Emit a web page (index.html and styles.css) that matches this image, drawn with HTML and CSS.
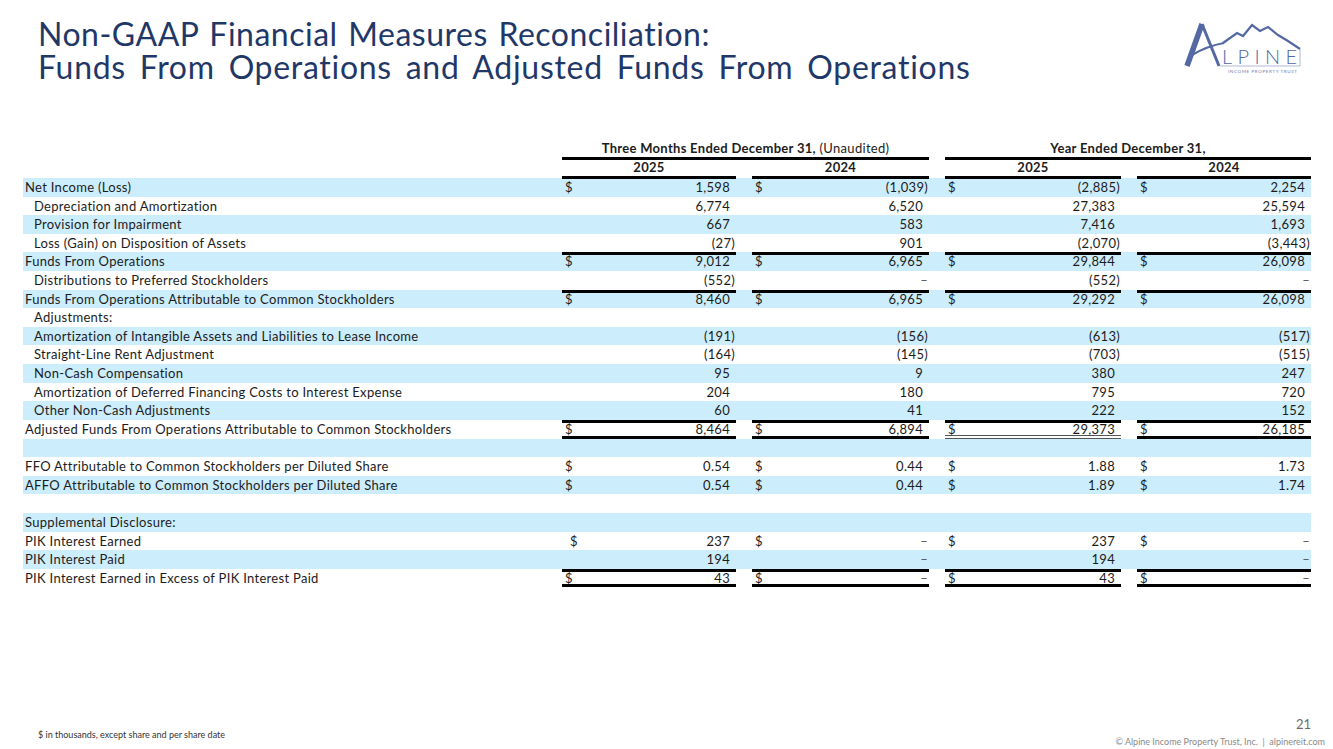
FILE: index.html
```html
<!DOCTYPE html>
<html>
<head>
<meta charset="utf-8">
<link rel="stylesheet" href="styles.css">
</head>
<body>
<div class="slide">
  <header class="top">
    <h1 class="title"><span class="tl">Non-GAAP Financial Measures Reconciliation:</span><span class="tl tl2">Funds From Operations and Adjusted Funds From Operations</span></h1>
    <svg class="logo" width="140" height="56" viewBox="0 0 140 56">
      <path d="M17,46 L32,4" fill="none" stroke="#5468a3" stroke-width="5.5"/>
      <path d="M32,4 L49,46" fill="none" stroke="#5468a3" stroke-width="3"/>
      <path d="M22,35 Q37,26 54,23" fill="none" stroke="#5468a3" stroke-width="2.2"/>
      <polyline points="53,23 67,13 73,16 82,5 90,11 98,7 108,15 118,21 130,29" fill="none" stroke="#5468a3" stroke-width="2.2" stroke-linejoin="miter"/>
      <path d="M130,29 L130,46 L50,46" fill="none" stroke="#8f9cc6" stroke-width="0.7"/>
      <text x="52" y="44" class="logo-word" textLength="75" lengthAdjust="spacing">LPINE</text>
      <text x="58" y="53" class="logo-sub" textLength="69" lengthAdjust="spacing">INCOME PROPERTY TRUST</text>
    </svg>
  </header>

  <section class="table">
    <div class="hrow group">
      <div></div>
      <div class="span2 grp"><b>Three Months Ended December 31,</b> (Unaudited)</div>
      <div class="span2 grp"><b>Year Ended December 31,</b></div>
    </div>
    <div class="hrow years">
      <div></div>
      <div class="yr">2025</div>
      <div class="yr">2024</div>
      <div class="yr">2025</div>
      <div class="yr">2024</div>
    </div>

    <div class="row sh">
      <div class="lab">Net Income (Loss)</div>
      <div class="n"><span class="d">$</span><span class="v">1,598</span></div>
      <div class="n"><span class="d">$</span><span class="v p">(1,039)</span></div>
      <div class="n"><span class="d">$</span><span class="v p">(2,885)</span></div>
      <div class="n"><span class="d">$</span><span class="v">2,254</span></div>
    </div>
    <div class="row">
      <div class="lab ind">Depreciation and Amortization</div>
      <div class="n"><span class="v">6,774</span></div>
      <div class="n"><span class="v">6,520</span></div>
      <div class="n"><span class="v">27,383</span></div>
      <div class="n"><span class="v">25,594</span></div>
    </div>
    <div class="row sh">
      <div class="lab ind">Provision for Impairment</div>
      <div class="n"><span class="v">667</span></div>
      <div class="n"><span class="v">583</span></div>
      <div class="n"><span class="v">7,416</span></div>
      <div class="n"><span class="v">1,693</span></div>
    </div>
    <div class="row">
      <div class="lab ind">Loss (Gain) on Disposition of Assets</div>
      <div class="n"><span class="v p">(27)</span></div>
      <div class="n"><span class="v">901</span></div>
      <div class="n"><span class="v p">(2,070)</span></div>
      <div class="n"><span class="v p">(3,443)</span></div>
    </div>
    <div class="row sh topline">
      <div class="lab">Funds From Operations</div>
      <div class="n"><span class="d">$</span><span class="v">9,012</span></div>
      <div class="n"><span class="d">$</span><span class="v">6,965</span></div>
      <div class="n"><span class="d">$</span><span class="v">29,844</span></div>
      <div class="n"><span class="d">$</span><span class="v">26,098</span></div>
    </div>
    <div class="row">
      <div class="lab ind">Distributions to Preferred Stockholders</div>
      <div class="n"><span class="v p">(552)</span></div>
      <div class="n"><span class="v p dash">–</span></div>
      <div class="n"><span class="v p">(552)</span></div>
      <div class="n"><span class="v p dash">–</span></div>
    </div>
    <div class="row sh topline">
      <div class="lab">Funds From Operations Attributable to Common Stockholders</div>
      <div class="n"><span class="d">$</span><span class="v">8,460</span></div>
      <div class="n"><span class="d">$</span><span class="v">6,965</span></div>
      <div class="n"><span class="d">$</span><span class="v">29,292</span></div>
      <div class="n"><span class="d">$</span><span class="v">26,098</span></div>
    </div>
    <div class="row">
      <div class="lab ind">Adjustments:</div>
      <div></div><div></div><div></div><div></div>
    </div>
    <div class="row sh">
      <div class="lab ind">Amortization of Intangible Assets and Liabilities to Lease Income</div>
      <div class="n"><span class="v p">(191)</span></div>
      <div class="n"><span class="v p">(156)</span></div>
      <div class="n"><span class="v p">(613)</span></div>
      <div class="n"><span class="v p">(517)</span></div>
    </div>
    <div class="row">
      <div class="lab ind">Straight-Line Rent Adjustment</div>
      <div class="n"><span class="v p">(164)</span></div>
      <div class="n"><span class="v p">(145)</span></div>
      <div class="n"><span class="v p">(703)</span></div>
      <div class="n"><span class="v p">(515)</span></div>
    </div>
    <div class="row sh">
      <div class="lab ind">Non-Cash Compensation</div>
      <div class="n"><span class="v">95</span></div>
      <div class="n"><span class="v">9</span></div>
      <div class="n"><span class="v">380</span></div>
      <div class="n"><span class="v">247</span></div>
    </div>
    <div class="row">
      <div class="lab ind">Amortization of Deferred Financing Costs to Interest Expense</div>
      <div class="n"><span class="v">204</span></div>
      <div class="n"><span class="v">180</span></div>
      <div class="n"><span class="v">795</span></div>
      <div class="n"><span class="v">720</span></div>
    </div>
    <div class="row sh">
      <div class="lab ind">Other Non-Cash Adjustments</div>
      <div class="n"><span class="v">60</span></div>
      <div class="n"><span class="v">41</span></div>
      <div class="n"><span class="v">222</span></div>
      <div class="n"><span class="v">152</span></div>
    </div>
    <div class="row topline botline">
      <div class="lab">Adjusted Funds From Operations Attributable to Common Stockholders</div>
      <div class="n"><span class="d">$</span><span class="v">8,464</span></div>
      <div class="n"><span class="d">$</span><span class="v">6,894</span></div>
      <div class="n dbl"><span class="d">$</span><span class="v">29,373</span></div>
      <div class="n"><span class="d">$</span><span class="v">26,185</span></div>
    </div>
    <div class="row sh">
      <div class="lab"></div>
      <div></div><div></div><div></div><div></div>
    </div>
    <div class="row">
      <div class="lab">FFO Attributable to Common Stockholders per Diluted Share</div>
      <div class="n"><span class="d">$</span><span class="v">0.54</span></div>
      <div class="n"><span class="d">$</span><span class="v">0.44</span></div>
      <div class="n"><span class="d">$</span><span class="v">1.88</span></div>
      <div class="n"><span class="d">$</span><span class="v">1.73</span></div>
    </div>
    <div class="row sh">
      <div class="lab">AFFO Attributable to Common Stockholders per Diluted Share</div>
      <div class="n"><span class="d">$</span><span class="v">0.54</span></div>
      <div class="n"><span class="d">$</span><span class="v">0.44</span></div>
      <div class="n"><span class="d">$</span><span class="v">1.89</span></div>
      <div class="n"><span class="d">$</span><span class="v">1.74</span></div>
    </div>
    <div class="row">
      <div class="lab"></div>
      <div></div><div></div><div></div><div></div>
    </div>
    <div class="row sh">
      <div class="lab">Supplemental Disclosure:</div>
      <div></div><div></div><div></div><div></div>
    </div>
    <div class="row">
      <div class="lab">PIK Interest Earned</div>
      <div class="n inset"><span class="d">$</span><span class="v">237</span></div>
      <div class="n"><span class="d">$</span><span class="v p dash">–</span></div>
      <div class="n"><span class="d">$</span><span class="v">237</span></div>
      <div class="n"><span class="d">$</span><span class="v p dash">–</span></div>
    </div>
    <div class="row sh">
      <div class="lab">PIK Interest Paid</div>
      <div class="n"><span class="v">194</span></div>
      <div class="n"><span class="v p dash">–</span></div>
      <div class="n"><span class="v">194</span></div>
      <div class="n"><span class="v p dash">–</span></div>
    </div>
    <div class="row topline botline">
      <div class="lab">PIK Interest Earned in Excess of PIK Interest Paid</div>
      <div class="n"><span class="d">$</span><span class="v">43</span></div>
      <div class="n"><span class="d">$</span><span class="v p dash">–</span></div>
      <div class="n"><span class="d">$</span><span class="v">43</span></div>
      <div class="n"><span class="d">$</span><span class="v p dash">–</span></div>
    </div>
  </section>

  <footer class="foot">
    <div class="note">$ in thousands, except share and per share date</div>
    <div class="meta">
      <div class="page">21</div>
      <div class="copy">© Alpine Income Property Trust, Inc. &nbsp;|&nbsp; alpinereit.com</div>
    </div>
  </footer>
</div>
</body>
</html>
```
FILE: styles.css
```css
html, body {
  margin: 0;
  padding: 0;
  background: #ffffff;
}
.slide {
  width: 1333px;
  height: 749px;
  display: flex;
  flex-direction: column;
  overflow: hidden;
  font-family: Lato, "Open Sans", sans-serif;
  color: #1c1c1c;
}
.top {
  display: flex;
  justify-content: space-between;
  align-items: flex-start;
  padding: 17px 23px 0 38px;
  height: 110px;
  box-sizing: border-box;
}
.title {
  margin: 0;
  font-family: Lato, sans-serif;
  font-weight: 400;
  font-size: 32px;
  color: #1f3868;
  letter-spacing: 0.5px;
  word-spacing: 2px;
  display: flex;
  flex-direction: column;
}
.tl {
  display: block;
  height: 33px;
  line-height: 33px;
  white-space: nowrap;
}
.tl2 {
  word-spacing: 5px;
  letter-spacing: 0.7px;
}
.logo {
  margin-top: 3px;
  flex: none;
}
.logo-word {
  font-family: Lato, sans-serif;
  font-weight: 300;
  font-size: 20px;
  fill: #5468a3;
}
.logo-sub {
  font-family: Lato, sans-serif;
  font-size: 4.6px;
  fill: #6f7fb2;
}

.table {
  margin: 30px 0 0 23px;
  width: 1288px;
  font-size: 13px;
  letter-spacing: 0.3px;
}
.hrow, .row {
  display: grid;
  grid-template-columns: 523px 174px 177px 176px 174px;
  column-gap: 16px;
}
.group {
  height: 18px;
}
.span2 {
  grid-column: span 2;
}
.grp {
  text-align: center;
  border-bottom: 3px solid #000;
  line-height: 17px;
}
.grp b {
  font-weight: 700;
}
.years {
  height: 20px;
}
.yr {
  text-align: center;
  font-weight: 700;
  line-height: 18px;
  border-bottom: 3px solid #000;
}
.row {
  height: 18.62px;
  line-height: 18.62px;
}
.sh {
  background: #ccedfc;
}
.lab {
  padding-left: 2px;
  white-space: nowrap;
}
.lab.ind {
  padding-left: 11px;
}
.n {
  display: flex;
  justify-content: flex-end;
  padding: 0 6px 0 3px;
  white-space: nowrap;
}
.n .d {
  margin-right: auto;
}
.n.inset {
  padding-left: 8px;
}
.v.p {
  margin-right: -5px;
}
.dash {
  color: #555;
}
.topline .n {
  box-shadow: inset 0 3px 0 #000;
}
.botline .n {
  box-shadow: inset 0 3px 0 #000, inset 0 -3px 0 #000;
}
.botline .n.dbl {
  box-shadow: inset 0 3px 0 #000, inset 0 -1px 0 #555, inset 0 -3px 0 #fff, inset 0 -4px 0 #555;
}

.foot {
  margin-top: auto;
  display: flex;
  justify-content: space-between;
  align-items: flex-end;
  padding: 0 8px 2px 38px;
}
.note {
  font-size: 9px;
  color: #333;
  padding-bottom: 7px;
}
.meta {
  display: flex;
  flex-direction: column;
  align-items: flex-end;
}
.page {
  font-size: 13px;
  color: #6b6b6b;
  margin-right: 14px;
  margin-bottom: 4px;
}
.copy {
  font-size: 9px;
  color: #8a8a8a;
}
```
